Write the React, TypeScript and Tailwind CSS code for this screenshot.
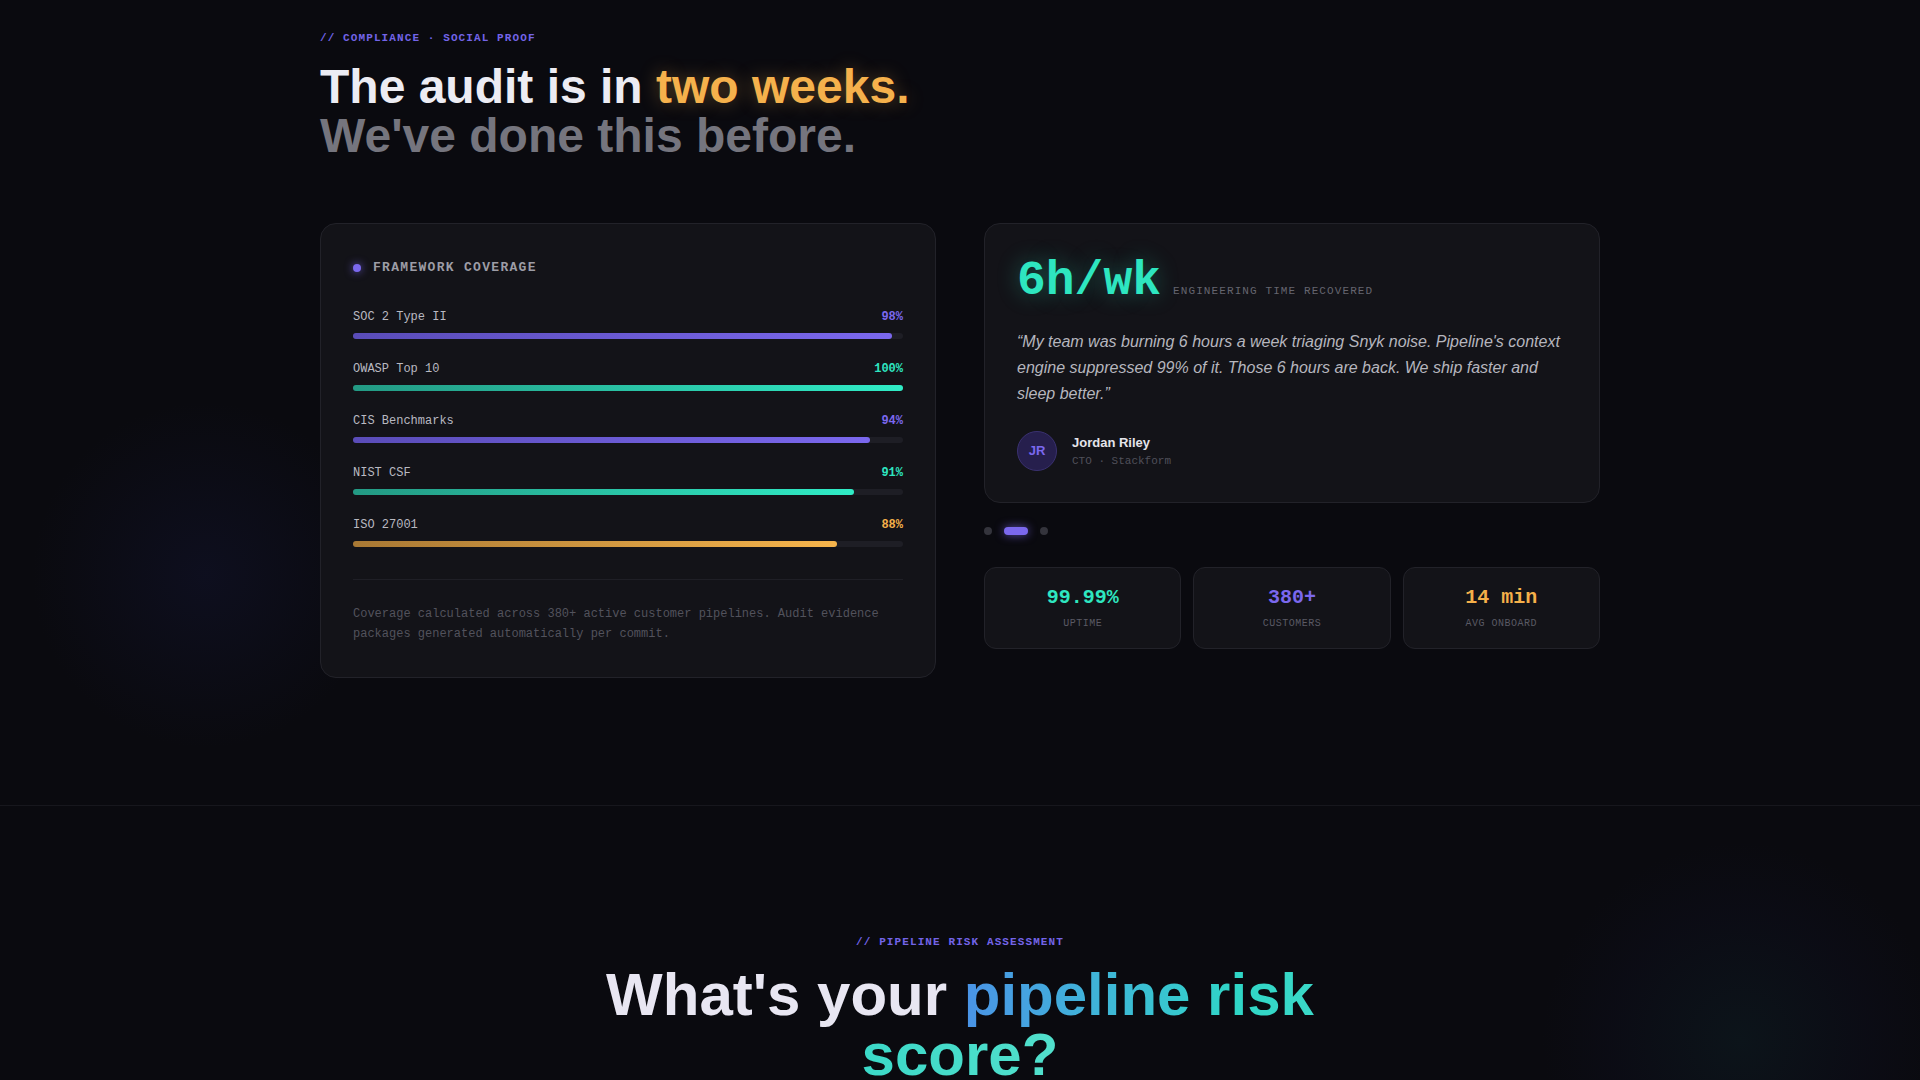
const frameworks = [
  { name: 'SOC 2 Type II', pct: 98, tone: 'purple' },
  { name: 'OWASP Top 10', pct: 100, tone: 'teal' },
  { name: 'CIS Benchmarks', pct: 94, tone: 'purple' },
  { name: 'NIST CSF', pct: 91, tone: 'teal' },
  { name: 'ISO 27001', pct: 88, tone: 'amber' },
]

const tones: Record<string, { text: string; bar: string }> = {
  purple: { text: 'text-[#7b68ee]', bar: 'bg-gradient-to-r from-[#5a4cb8] to-[#7b68ee]' },
  teal: { text: 'text-[#2ee6c0]', bar: 'bg-gradient-to-r from-[#239a84] to-[#30ecc6]' },
  amber: { text: 'text-[#f5b04a]', bar: 'bg-gradient-to-r from-[#a97934] to-[#f7b54c]' },
}

const stats = [
  { value: '99.99%', label: 'Uptime', color: 'text-[#2ee6c0]' },
  { value: '380+', label: 'Customers', color: 'text-[#7b68ee]' },
  { value: '14 min', label: 'Avg Onboard', color: 'text-[#f5b04a]' },
]

const mono = "font-['Liberation_Mono',monospace]"

function FrameworkCard() {
  return (
    <div className="rounded-2xl border border-[#222229] bg-[#131318] px-8 pt-[34px] pb-[33px]">
      <div className="flex items-center gap-3">
        <span className="h-2 w-2 rounded-full bg-[#7b68ee] shadow-[0_0_8px_rgba(123,104,238,0.8)]" />
        <span className={`${mono} text-[13px] font-bold leading-5 tracking-[0.1em] text-[#9d9da6]`}>FRAMEWORK COVERAGE</span>
      </div>

      <div className="mt-[31px] flex flex-col gap-[22px]">
        {frameworks.map((f) => (
          <div key={f.name}>
            <div className={`${mono} flex justify-between text-xs leading-4`}>
              <span className="text-[#b9b9c1]">{f.name}</span>
              <span className={`font-bold ${tones[f.tone].text}`}>{f.pct}%</span>
            </div>
            <div className="mt-2 h-1.5 w-full rounded-full bg-[#1e1e25]">
              <div className={`h-1.5 rounded-full ${tones[f.tone].bar}`} style={{ width: `${f.pct}%` }} />
            </div>
          </div>
        ))}
      </div>

      <div className="mt-8 border-t border-[#1f1f26] pt-6">
        <p className={`${mono} text-xs leading-5 text-[#52525c]`}>
          Coverage calculated across 380+ active customer pipelines. Audit evidence packages generated automatically per commit.
        </p>
      </div>
    </div>
  )
}

function TestimonialCard() {
  return (
    <div className="rounded-2xl border border-[#222229] bg-[#131318] px-8 pt-[33px] pb-[31px]">
      <div className="flex items-baseline gap-3">
        <span className={`${mono} text-5xl font-bold leading-none text-[#2ee6c0] [text-shadow:0_0_22px_rgba(46,230,192,0.35)]`}>6h/wk</span>
        <span className={`${mono} text-[11px] tracking-[0.1em] text-[#65656f]`}>ENGINEERING TIME RECOVERED</span>
      </div>

      <p className="mt-6 font-['Liberation_Sans',sans-serif] text-base italic leading-[26px] text-[#b6b6be]">
        “My team was burning 6 hours a week triaging Snyk noise. Pipeline's context engine suppressed 99% of it. Those 6 hours are back. We ship faster and sleep better.”
      </p>

      <div className="mt-6 flex items-center gap-3.5">
        <div className="flex h-10 w-10 items-center justify-center rounded-full border border-[#3a3170] bg-[#261f4d]">
          <span className="font-['Liberation_Sans',sans-serif] text-[13px] font-bold text-[#7b68ee]">JR</span>
        </div>
        <div className="pl-px">
          <div className="font-['Liberation_Sans',sans-serif] text-[13px] font-bold leading-5 text-[#e4e4ea]">Jordan Riley</div>
          <div className={`${mono} text-[11px] leading-4 text-[#50505a]`}>CTO · Stackform</div>
        </div>
      </div>
    </div>
  )
}

export default function App() {
  return (
    <div className="relative min-h-screen overflow-hidden bg-[#0a0a0f]">
      {/* background glows */}
      <div className="pointer-events-none absolute left-[30px] top-[400px] h-[350px] w-[350px] rounded-full bg-[radial-gradient(circle,rgba(26,30,80,0.24),rgba(10,10,15,0)_70%)]" />
      <div className="pointer-events-none absolute left-[1540px] top-[840px] h-[400px] w-[400px] rounded-full bg-[radial-gradient(circle,rgba(20,60,70,0.2),rgba(20,25,60,0.12)_45%,rgba(10,10,15,0)_70%)]" />

      <section className="relative pt-[30px] pb-[127px]">
        <div className="mx-auto w-[1280px]">
          <div className={`${mono} text-[11px] font-bold leading-4 tracking-[0.1em] text-[#7364e8]`}>// COMPLIANCE · SOCIAL PROOF</div>
          <h1 className="mt-4 font-['Liberation_Sans',sans-serif] text-5xl font-bold leading-[49px]">
            <span className="text-[#ececf3]">The audit is in </span>
            <span className="text-[#f5b14c] [text-shadow:0_0_18px_rgba(245,177,76,0.35)]">two weeks.</span>
            <br />
            <span className="text-[#75757e]">We've done this before.</span>
          </h1>

          <div className="mt-[63px] grid grid-cols-2 gap-12">
            <FrameworkCard />
            <div>
              <TestimonialCard />
              <div className="mt-6 flex items-center gap-3">
                <span className="h-2 w-2 rounded-full bg-[#34343c]" />
                <span className="h-2 w-6 rounded-full bg-[#7b68ee] shadow-[0_0_10px_rgba(123,104,238,0.7)]" />
                <span className="h-2 w-2 rounded-full bg-[#34343c]" />
              </div>
              <div className="mt-8 grid grid-cols-3 gap-3">
                {stats.map((s) => (
                  <div key={s.label} className="rounded-xl border border-[#222229] bg-[#131318] py-4 text-center">
                    <div className={`${mono} text-xl font-bold leading-7 ${s.color}`}>{s.value}</div>
                    <div className={`${mono} mt-1 text-[10px] uppercase leading-4 tracking-[0.05em] text-[#5a5a64]`}>{s.label}</div>
                  </div>
                ))}
              </div>
            </div>
          </div>
        </div>
      </section>

      <section className="relative border-t border-[#17171d] pt-32 text-center">
        <div className={`${mono} text-[11px] font-bold leading-4 tracking-[0.1em] text-[#7364e8]`}>// PIPELINE RISK ASSESSMENT</div>
        <h2 className="mx-auto mt-[15px] w-[720px] font-['Liberation_Sans',sans-serif] text-6xl font-bold leading-none">
          <span className="text-[#e8e6f2]">What's your </span>
          <span className="bg-gradient-to-r from-[#4a93e6] via-[#2fd6c6] to-[#52e0cc] bg-clip-text text-transparent">pipeline risk score?</span>
        </h2>
      </section>
    </div>
  )
}
